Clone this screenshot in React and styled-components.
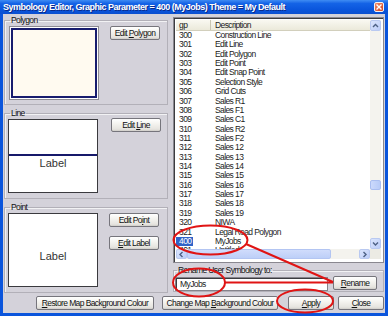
import React from 'react';
import styled, { createGlobalStyle } from 'styled-components';

const UI_FONT = `"Liberation Sans", Arial, sans-serif`;

const GlobalStyle = createGlobalStyle`
  html, body {
    margin: 0;
    padding: 0;
    background: #ffffff;
  }
  body {
    font-family: ${UI_FONT};
    font-size: 8.5px;
    letter-spacing: -0.6px;
    color: #111;
  }
  * {
    box-sizing: border-box;
  }
`;

const rows = [
  ['300', 'Construction Line'],
  ['301', 'Edit Line'],
  ['302', 'Edit Polygon'],
  ['303', 'Edit Point'],
  ['304', 'Edit Snap Point'],
  ['305', 'Selection Style'],
  ['306', 'Grid Cuts'],
  ['307', 'Sales R1'],
  ['308', 'Sales F1'],
  ['309', 'Sales C1'],
  ['310', 'Sales R2'],
  ['311', 'Sales F2'],
  ['312', 'Sales 12'],
  ['313', 'Sales 13'],
  ['314', 'Sales 14'],
  ['315', 'Sales 15'],
  ['316', 'Sales 16'],
  ['317', 'Sales 17'],
  ['318', 'Sales 18'],
  ['319', 'Sales 19'],
  ['320', 'NIWA'],
  ['321', 'Legal Road Polygon'],
  ['400', 'MyJobs', true],
  ['401', 'Untitled'],
];

const Window = styled.div`
  position: relative;
  width: 388px;
  height: 316px;
  display: flex;
  flex-direction: column;
  padding: 0 3px 3px;
  background: #0b55dc;
  overflow: hidden;
`;

const TitleBar = styled.div`
  height: 14px;
  margin: 0 -3px;
  padding: 0 4px 0 3px;
  display: flex;
  align-items: center;
  justify-content: space-between;
  background: linear-gradient(#3f8cf3 0%, #1463e6 25%, #0a55dc 70%, #0b4fd0 100%);
`;

const Title = styled.span`
  color: #fff;
  font-weight: bold;
  font-size: 9px;
  letter-spacing: -0.5px;
  line-height: 14px;
  white-space: nowrap;
  text-shadow: 1px 1px 0 #0a2a8a;
`;

const CloseBox = styled.span`
  width: 10px;
  height: 10px;
  border: 1px solid #f4f4f4;
  border-radius: 2px;
  background: linear-gradient(135deg, #f08a68, #d4431f);
  display: flex;
  align-items: center;
  justify-content: center;
`;

const Body = styled.div`
  flex: 1;
  display: flex;
  flex-direction: column;
  padding: 1px 1px 0 1px;
  background: #d4d2da;
`;

const Main = styled.div`
  height: 278px;
  display: flex;
  gap: 5px;
`;

const LeftCol = styled.div`
  width: 164px;
  display: flex;
  flex-direction: column;
  gap: 3px;
`;

const RightCol = styled.div`
  flex: 1;
  display: flex;
  flex-direction: column;
  gap: 2px;
  padding-top: 2px;
`;

const Group = styled.fieldset`
  margin: 0;
  height: ${(p) => p.$h}px;
  padding: 1px 3px 2px ${(p) => p.$pl ?? 3}px;
  border: 1px solid #b2b0b8;
  box-shadow: inset 1px 1px 0 #f2f2f4;
  display: flex;
  align-items: flex-start;
  min-width: 0;
`;

const Legend = styled.legend`
  margin-left: 2px;
  padding: 0 1px;
  line-height: 10px;
  color: #111;
`;

const PolyPreview = styled.div`
  width: 90px;
  height: 74px;
  margin-left: 1px;
  padding: 1px;
  border: 1px solid #8e8c94;
  background: #ffffff;
  display: flex;
`;

const PolyFill = styled.div`
  flex: 1;
  border: 2px solid #181c6e;
  background: #fffaf0;
`;

const Preview = styled.div`
  width: 90px;
  height: 74px;
  border: 1px solid #3a3a3e;
  background: #ffffff;
  display: flex;
  flex-direction: column;
  align-items: center;
  justify-content: ${(p) => (p.$center ? 'center' : 'flex-start')};
  padding-top: ${(p) => p.$pt}px;
`;

const LineStroke = styled.div`
  align-self: stretch;
  height: 2px;
  background: #16196a;
`;

const LabelText = styled.span`
  font-size: 11px;
  letter-spacing: 0;
  line-height: 12px;
  color: #333;
  margin-top: ${(p) => p.$mt ?? 0}px;
`;

const ButtonCol = styled.div`
  display: flex;
  flex-direction: column;
  gap: 9px;
  padding-left: ${(p) => p.$pl}px;
  margin-top: ${(p) => p.$mt ?? 0}px;
`;

const ButtonBox = styled.button`
  width: ${(p) => p.$w}px;
  height: 14px;
  margin-left: ${(p) => p.$ml ?? 0}px;
  padding: 0;
  font-family: ${UI_FONT};
  font-size: 8.5px;
  letter-spacing: -0.6px;
  line-height: 12px;
  color: #111;
  border: 1px solid #76757c;
  border-radius: 2px;
  background: linear-gradient(#ffffff 0%, #f4f3ef 40%, #e6e4df 85%, #cfcdc8 100%);
  white-space: nowrap;
  display: flex;
  align-items: center;
  justify-content: center;
  flex-shrink: 0;

  u {
    text-decoration-thickness: 1px;
    text-underline-offset: 1px;
  }
`;

const Button = ({ children, ...rest }) => (
  <ButtonBox {...rest}>
    <span>{children}</span>
  </ButtonBox>
);

const ListFrame = styled.div`
  height: 246px;
  border: 1px solid #8a8890;
  box-shadow: inset 1px 1px 0 #3c3c40;
  padding: 2px 2px 3px 2px;
  background: #ffffff;
  display: grid;
  grid-template-columns: 1fr 11px;
  grid-template-rows: 1fr 10px;
`;

const ListBody = styled.div`
  overflow: hidden;
  display: flex;
  flex-direction: column;
`;

const HeaderRow = styled.div`
  height: 11px;
  flex-shrink: 0;
  display: grid;
  grid-template-columns: 35px 1fr;
  background: linear-gradient(#f9f8f1, #ebe9da);
  border-bottom: 1px solid #d2cfbc;
`;

const HeaderCell = styled.div`
  padding-left: ${(p) => p.$pl}px;
  line-height: 10px;
  color: #222;
  border-right: ${(p) => (p.$divider ? '1px solid #c9c6b2' : 'none')};
`;

const Row = styled.div`
  height: 9.36px;
  flex-shrink: 0;
  display: grid;
  grid-template-columns: 35px 1fr;
  line-height: 9px;
  color: #222;
  white-space: nowrap;
`;

const GpCell = styled.div`
  display: flex;
`;

const GpText = styled.span`
  padding: 0 2px 0 3px;
  background: ${(p) => (p.$selected ? '#2f63c8' : 'transparent')};
  color: ${(p) => (p.$selected ? '#ffffff' : 'inherit')};
`;

const DescCell = styled.div`
  padding-left: 4px;
`;

const VScroll = styled.div`
  display: flex;
  flex-direction: column;
  background: #f4f3ee;
`;

const HScroll = styled.div`
  display: flex;
  background: #f4f3ee;
`;

const ArrowBtn = styled.div`
  width: 11px;
  height: ${(p) => p.$h ?? 11}px;
  flex-shrink: 0;
  border: 1px solid #b9c9f1;
  border-radius: 2px;
  background: linear-gradient(135deg, #dbe5fd, #bccdf8);
  display: flex;
  align-items: center;
  justify-content: center;
`;

const VTrack = styled.div`
  flex: 1;
  display: flex;
  flex-direction: column;
`;

const VThumb = styled.div`
  height: 10px;
  margin-top: ${(p) => p.$offset}px;
  border: 1px solid #aabef0;
  border-radius: 2px;
  background: linear-gradient(90deg, #cbd9fc, #b8cbf7);
`;

const HThumb = styled.div`
  width: ${(p) => p.$w}px;
  border: 1px solid #b3c5f2;
  border-radius: 2px;
  background: linear-gradient(#d0dcfc, #bdcff8);
`;

const HTrack = styled.div`
  flex: 1;
`;

const Corner = styled.div`
  background: #ecebe4;
`;

const RenameRow = styled.div`
  display: flex;
  align-items: flex-start;
  gap: 5px;
  width: 100%;
`;

const TextInput = styled.div`
  width: 153px;
  height: 14px;
  margin-top: 1px;
  border: 1px solid #85838b;
  box-shadow: inset 1px 1px 0 #3c3c40;
  background: #ffffff;
  padding: 1px 0 0 4px;
  line-height: 11px;
  color: #222;
`;

const Footer = styled.div`
  display: flex;
  padding: 3px 0 0 32px;
`;

const Overlay = styled.svg`
  position: absolute;
  left: 0;
  top: 0;
  pointer-events: none;
`;

const Chevron = ({ dir }) => {
  const paths = {
    up: 'M2 6 L4.5 3.5 L7 6',
    down: 'M2 3.5 L4.5 6 L7 3.5',
    left: 'M5.5 2 L3 4.5 L5.5 7',
    right: 'M3.5 2 L6 4.5 L3.5 7',
  };
  return (
    <svg width="9" height="9" viewBox="0 0 9 9">
      <path d={paths[dir]} fill="none" stroke="#4d6185" strokeWidth="1.4" />
    </svg>
  );
};

export default function App() {
  return (
    <>
      <GlobalStyle />
      <Window>
        <TitleBar>
          <Title>Symbology Editor, Graphic Parameter = 400 (MyJobs) Theme = My Default</Title>
          <CloseBox>
            <svg width="6" height="6" viewBox="0 0 6 6">
              <path d="M0.5 0.5 L5.5 5.5 M5.5 0.5 L0.5 5.5" stroke="#fff" strokeWidth="1.4" />
            </svg>
          </CloseBox>
        </TitleBar>

        <Body>
          <Main>
            <LeftCol>
              <Group $h={90} $pl={3}>
                <Legend>Polygon</Legend>
                <PolyPreview>
                  <PolyFill />
                </PolyPreview>
                <ButtonCol $pl={11}>
                  <Button $w={50}>Edit <u>P</u>olygon</Button>
                </ButtonCol>
              </Group>

              <Group $h={91}>
                <Legend>Line</Legend>
                <Preview $pt={34}>
                  <LineStroke />
                  <LabelText $mt={1}>Label</LabelText>
                </Preview>
                <ButtonCol $pl={13} $mt={-1}>
                  <Button $w={50}>Edit <u>L</u>ine</Button>
                </ButtonCol>
              </Group>

              <Group $h={91}>
                <Legend>Point</Legend>
                <Preview $center $pt={12}>
                  <LabelText>Label</LabelText>
                </Preview>
                <ButtonCol $pl={11}>
                  <Button $w={50}>Edit Po<u>i</u>nt</Button>
                  <Button $w={50}><u>E</u>dit Label</Button>
                </ButtonCol>
              </Group>
            </LeftCol>

            <RightCol>
              <ListFrame>
                <ListBody>
                  <HeaderRow>
                    <HeaderCell $pl={3} $divider>gp</HeaderCell>
                    <HeaderCell $pl={4}>Description</HeaderCell>
                  </HeaderRow>
                  {rows.map(([gp, desc, selected]) => (
                    <Row key={gp}>
                      <GpCell>
                        <GpText $selected={selected}>{gp}</GpText>
                      </GpCell>
                      <DescCell>{desc}</DescCell>
                    </Row>
                  ))}
                </ListBody>
                <VScroll>
                  <ArrowBtn><Chevron dir="up" /></ArrowBtn>
                  <VTrack>
                    <VThumb $offset={149} />
                  </VTrack>
                  <ArrowBtn><Chevron dir="down" /></ArrowBtn>
                </VScroll>
                <HScroll>
                  <ArrowBtn $h={10}><Chevron dir="left" /></ArrowBtn>
                  <HThumb $w={144} />
                  <HTrack />
                  <ArrowBtn $h={10}><Chevron dir="right" /></ArrowBtn>
                </HScroll>
                <Corner />
              </ListFrame>

              <Group $h={27} $pl={1}>
                <Legend>Rename User Symbology to:</Legend>
                <RenameRow>
                  <TextInput>MyJobs</TextInput>
                  <Button $w={44}><u>R</u>ename</Button>
                </RenameRow>
              </Group>
            </RightCol>
          </Main>

          <Footer>
            <Button $w={118}><u>R</u>estore Map Background Colour</Button>
            <Button $w={116} $ml={8}>Change Map <u>B</u>ackground Colour</Button>
            <Button $w={46} $ml={10}><u>A</u>pply</Button>
            <Button $w={46} $ml={4}><u>C</u>lose</Button>
          </Footer>
        </Body>

        <Overlay width="388" height="316" viewBox="0 0 388 316">
          <g fill="none" stroke="#e01414" strokeWidth="2">
            <ellipse cx="210.5" cy="240" rx="37" ry="14.5" />
            <ellipse cx="199" cy="282.5" rx="26" ry="14" />
            <ellipse cx="305" cy="301" rx="28" ry="11.5" />
            <path d="M246 244 L333 282 M225 282.5 L333 282.5" />
          </g>
        </Overlay>
      </Window>
    </>
  );
}
